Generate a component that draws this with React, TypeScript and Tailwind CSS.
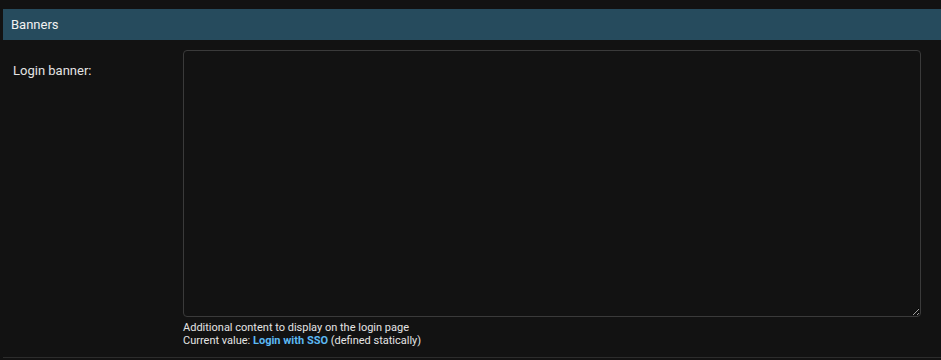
export default function App() {
  return (
    <div
      className="h-[360px] w-[941px] overflow-hidden bg-[#121212] pt-[9px] pl-[3px] text-[#e4e4e4]"
      style={{ fontFamily: "Roboto, 'Liberation Sans', sans-serif" }}
    >
      <h2 className="flex h-[31px] items-center bg-[#264b5d] px-[8px] text-[13px] font-normal text-[#f2f2f2]">
        Banners
      </h2>
      <div className="flex border-b border-[#2c2c2c] pt-[10px] pb-[10px]">
        <label className="w-[180px] shrink-0 pt-[11px] pl-[10px] text-[13px]">Login banner:</label>
        <div className="flex flex-col">
          <textarea className="block h-[267px] w-[738px] rounded-[4px] border border-[#3a3a3a] bg-[#121212] outline-none" />
          <div className="mt-[4px] text-[11px] leading-[13px] text-[#e4e4e4]">
            <div>Additional content to display on the login page</div>
            <div>
              Current value: <span className="font-bold text-[#5cb9f2]">Login with SSO</span> (defined statically)
            </div>
          </div>
        </div>
      </div>
    </div>
  );
}
